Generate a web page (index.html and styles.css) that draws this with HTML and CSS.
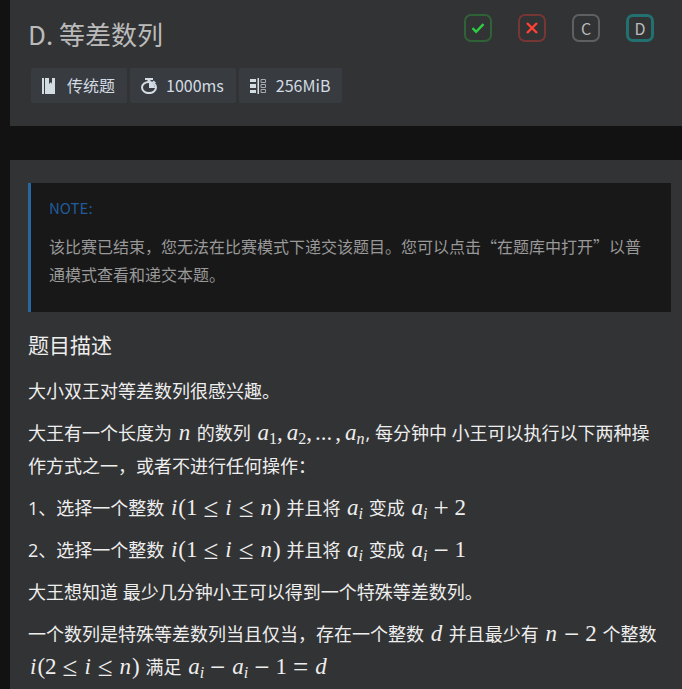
FILE: index.html
```html
<!DOCTYPE html>
<html lang="zh-CN">
<head>
  <meta charset="UTF-8">
  <meta name="viewport" content="width=device-width, initial-scale=1.0">
  <title>D. 等差数列</title>
  <link rel="stylesheet" href="styles.css">
</head>
<body>
  <header class="section header">
    <div class="title-row">
      <h1>D. 等差数列</h1>
      <nav class="problems">
        <a class="pass" href="#a" aria-label="A">
          <svg width="14" height="14" viewBox="0 0 14 14"><path d="M1.5 7.2l3.6 3.6 7.4-7.6"/></svg>
        </a>
        <a class="fail" href="#b" aria-label="B">
          <svg width="14" height="14" viewBox="0 0 14 14"><path d="M2 2l10 10M12 2L2 12"/></svg>
        </a>
        <a href="#c">C</a>
        <a class="active" href="#d">D</a>
      </nav>
    </div>
    <ul class="tags">
      <li>
        <svg width="16" height="16" viewBox="0 0 16 16">
          <path d="M0 0h2v16H0zM3 0h4v6l2-2 1 2V0h3v16H3z"/>
        </svg>
        传统题
      </li>
      <li>
        <svg width="16" height="16" viewBox="0 0 16 16">
          <path d="M4 0h8v2H9.500v2h-3V2H4z"/>
          <ellipse class="line" cx="8" cy="9.500" rx="7" ry="5.600"/>
          <path d="M8 4.500c3.500 0 6 2 6 5.500H8zM12.500 2.600l2.500 1.800-1 1.200-2.400-1.800z"/>
        </svg>
        1000ms
      </li>
      <li>
        <svg width="17" height="16" viewBox="0 0 17 16">
          <path d="M0 1h6v3H0zM0 6h6v4H0zM0 12h6v3H0zM7.500 0h1.500v16H7.500z"/>
          <path class="thin" d="M11 1.500h4.500v3H11zM11 6.500h4.500v3H11zM11 11.500h4.500v3H11z"/>
        </svg>
        256MiB
      </li>
    </ul>
  </header>

  <main class="section content">
    <blockquote class="note">
      <p class="note-title">NOTE:</p>
      <p>该比赛已结束，您无法在比赛模式下递交该题目。您可以点击“在题库中打开”以普通模式查看和递交本题。</p>
    </blockquote>

    <article class="prose">
      <h2>题目描述</h2>
      <p>大小双王对等差数列很感兴趣。</p>
      <p>大王有一个长度为 <span class="math"><i>n</i></span> 的数列 <span class="math"><i>a</i><sub>1</sub><b>,</b><i>a</i><sub>2</sub><b>,</b><b>...</b><b>,</b><i>a</i><sub><i>n</i></sub></span>, 每分钟中 小王可以执行以下两种操作方式之一，或者不进行任何操作：</p>
      <p>1、选择一个整数 <span class="math"><i>i</i>(1<span class="op">≤</span><i>i</i><span class="op">≤</span><i>n</i>)</span> 并且将 <span class="math"><i>a</i><sub><i>i</i></sub></span> 变成 <span class="math"><i>a</i><sub><i>i</i></sub><span class="op">+</span>2</span></p>
      <p>2、选择一个整数 <span class="math"><i>i</i>(1<span class="op">≤</span><i>i</i><span class="op">≤</span><i>n</i>)</span> 并且将 <span class="math"><i>a</i><sub><i>i</i></sub></span> 变成 <span class="math"><i>a</i><sub><i>i</i></sub><span class="op">−</span>1</span></p>
      <p>大王想知道 最少几分钟小王可以得到一个特殊等差数列。</p>
      <p>一个数列是特殊等差数列当且仅当，存在一个整数 <span class="math"><i>d</i></span> 并且最少有 <span class="math"><i>n</i><span class="op">−</span>2</span> 个整数 <span class="math"><i>i</i>(2<span class="op">≤</span><i>i</i><span class="op">≤</span><i>n</i>)</span> 满足 <span class="math"><i>a</i><sub><i>i</i></sub><span class="op">−</span><i>a</i><sub><i>i</i></sub><span class="op">−</span>1<span class="op">=</span><i>d</i></span></p>
    </article>
  </main>
</body>
</html>
```
FILE: styles.css
```css
body {
  margin: 0 0 0 10px;
  background-color: #121212;
  color: #eeeeee;
  font-family: "Noto Sans CJK SC", sans-serif;
  font-size: 16px;
}
h1, h2, p, ul, blockquote {
  margin: 0;
  padding: 0;
  font-weight: normal;
}
.section {
  background-color: #323334;
}

/* header */
.header {
  padding: 14px 28px 23px 18px;
  margin-bottom: 34px;
}
.title-row {
  display: flex;
  justify-content: space-between;
  align-items: flex-start;
}
h1 {
  font-size: 26px;
  line-height: 40px;
  color: #bbbbbb;
}
.problems {
  display: flex;
  gap: 26px;
}
.problems a {
  display: flex;
  align-items: center;
  justify-content: center;
  box-sizing: border-box;
  width: 28px;
  height: 28px;
  border: 2px solid #5f6062;
  border-radius: 7px;
  color: #bbbbbb;
  text-decoration: none;
}
.problems .pass {
  border-color: #2f6237;
}
.problems .fail {
  border-color: #753634;
}
.problems .active {
  border: 3px solid #22706f;
}
.problems svg {
  fill: none;
  stroke-width: 2.4;
}
.pass svg {
  stroke: #2ecc40;
}
.fail svg {
  stroke: #ff4136;
}
.tags {
  display: flex;
  flex-wrap: wrap;
  gap: 3px;
  margin: 14px 0 0 3px;
  list-style: none;
}
.tags li {
  display: flex;
  align-items: center;
  gap: 9px;
  padding: 0 12px 0 11px;
  line-height: 35px;
  border-radius: 2px;
  background-color: #383b40;
  color: #d3dbe3;
}
.tags svg {
  fill: #d3dbe3;
}
.tags .line, .tags .thin {
  fill: none;
  stroke: #d3dbe3;
  stroke-width: 2;
}
.tags .thin {
  stroke: #a5abb2;
  stroke-width: 1;
}

/* problem statement */
.content {
  padding: 23px 11px 20px 18px;
}
.note {
  padding: 11px 18px 24px;
  border-left: 3px solid #2768a1;
  background-color: #181818;
  color: #999999;
  line-height: 28px;
}
.note-title {
  margin-bottom: 10px;
  color: #205b9b;
  font-size: 15px;
}
.prose {
  padding-right: 8px;
  font-family: "Open Sans", "Noto Sans CJK SC", sans-serif;
  font-size: 18px;
  line-height: 33px;
}
.prose h2 {
  margin: 17px 0 13px;
  font-size: 21px;
}
.prose p {
  margin-bottom: 9px;
}

/* formulas */
.math {
  padding: 0 1px;
  font-family: "Liberation Serif", serif;
  font-size: 23px;
  line-height: 1;
  white-space: nowrap;
}
.math i {
  padding: 0 1px;
}
.math b {
  padding-right: 3px;
  font-weight: normal;
}
.math sub {
  margin-left: -1px;
  font-size: 16px;
  line-height: 0;
  vertical-align: -4px;
}
.math sub i {
  padding: 0;
}
.op {
  padding: 0 6px;
  font-size: 27px;
  line-height: 0;
  vertical-align: -2px;
}
```
